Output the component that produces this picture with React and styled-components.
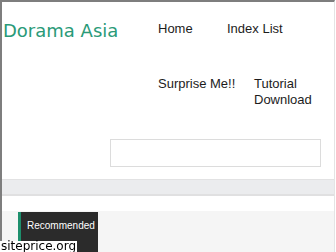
import React from "react";
import styled, { createGlobalStyle } from "styled-components";

const Global = createGlobalStyle`
  html, body {
    margin: 0;
    padding: 0;
    background: #ffffff;
  }
  * {
    box-sizing: border-box;
  }
`;

const navItems = [
  { label: "Home", w: 69 },
  { label: "Index List" },
  { label: "Surprise Me!!", w: 96 },
  { label: "Tutorial Download", w: 78 },
];

export default function App() {
  return (
    <>
      <Global />
      <Page>
        <Header>
          <Logo>Dorama Asia</Logo>
          <Nav>
            {navItems.map((item) => (
              <NavItem key={item.label} $w={item.w}>
                {item.label}
              </NavItem>
            ))}
          </Nav>
        </Header>
        <SearchRow>
          <SearchInput type="text" aria-label="search" />
        </SearchRow>
        <Band />
        <Content>
          <Tab>Recommended</Tab>
        </Content>
      </Page>
      <Watermark>siteprice.org</Watermark>
    </>
  );
}

// -----------Style--------------

const Page = styled.div`
  width: 335px;
  height: 252px;
  overflow: hidden;
  background: #fff;
  border-left: 2px solid #7e7e7e;
  border-top: 2px solid #7e7e7e;
  border-right: 1px solid #e4e4e4;
  display: flex;
  flex-direction: column;
`;

const Header = styled.div`
  display: flex;
  padding-top: 19px;
`;

const Logo = styled.div`
  width: 156px;
  padding-left: 1px;
  font-family: "DejaVu Sans", sans-serif;
  font-size: 18px;
  line-height: 20px;
  color: #2a9a78;
`;

const Nav = styled.ul`
  flex: 1;
  margin: 0;
  padding: 0;
  list-style: none;
  display: flex;
  flex-wrap: wrap;
  align-items: flex-start;
  row-gap: 39px;
`;

const NavItem = styled.li`
  width: ${(p) => (p.$w ? `${p.$w}px` : "auto")};
  font-family: "Liberation Sans", Arial, sans-serif;
  font-size: 13px;
  line-height: 16px;
  color: #1c1c1c;
`;

const SearchRow = styled.div`
  padding-top: 31px;
  padding-left: 108px;
`;

const SearchInput = styled.input`
  display: block;
  width: 211px;
  height: 28px;
  margin: 0;
  border: 1px solid #dcdcdc;
  background: #fff;
  outline: none;
`;

const Band = styled.div`
  margin-top: 12px;
  height: 32px;
  background: #ebecee;
  border-top: 1px solid #e2e2e3;
  border-bottom: 2px solid #e0e0e1;
`;

const Content = styled.div`
  flex: 1;
  margin-top: 15px;
  padding-top: 1px;
  padding-left: 16px;
  background: #f5f5f5;
`;

const Tab = styled.div`
  width: 80px;
  height: 40px;
  padding: 6px 0 0 6px;
  background: #2b2b2b;
  border-left: 3px solid #1d8f6c;
  font-family: "Liberation Sans", Arial, sans-serif;
  font-size: 10px;
  line-height: 16px;
  color: #ffffff;
  white-space: nowrap;
`;

const Watermark = styled.div`
  position: fixed;
  left: 0;
  bottom: 0;
  height: 11px;
  padding: 0 1px;
  background: #ffffff;
  font-family: "DejaVu Sans", sans-serif;
  font-size: 12px;
  line-height: 11px;
  color: #000;
`;
